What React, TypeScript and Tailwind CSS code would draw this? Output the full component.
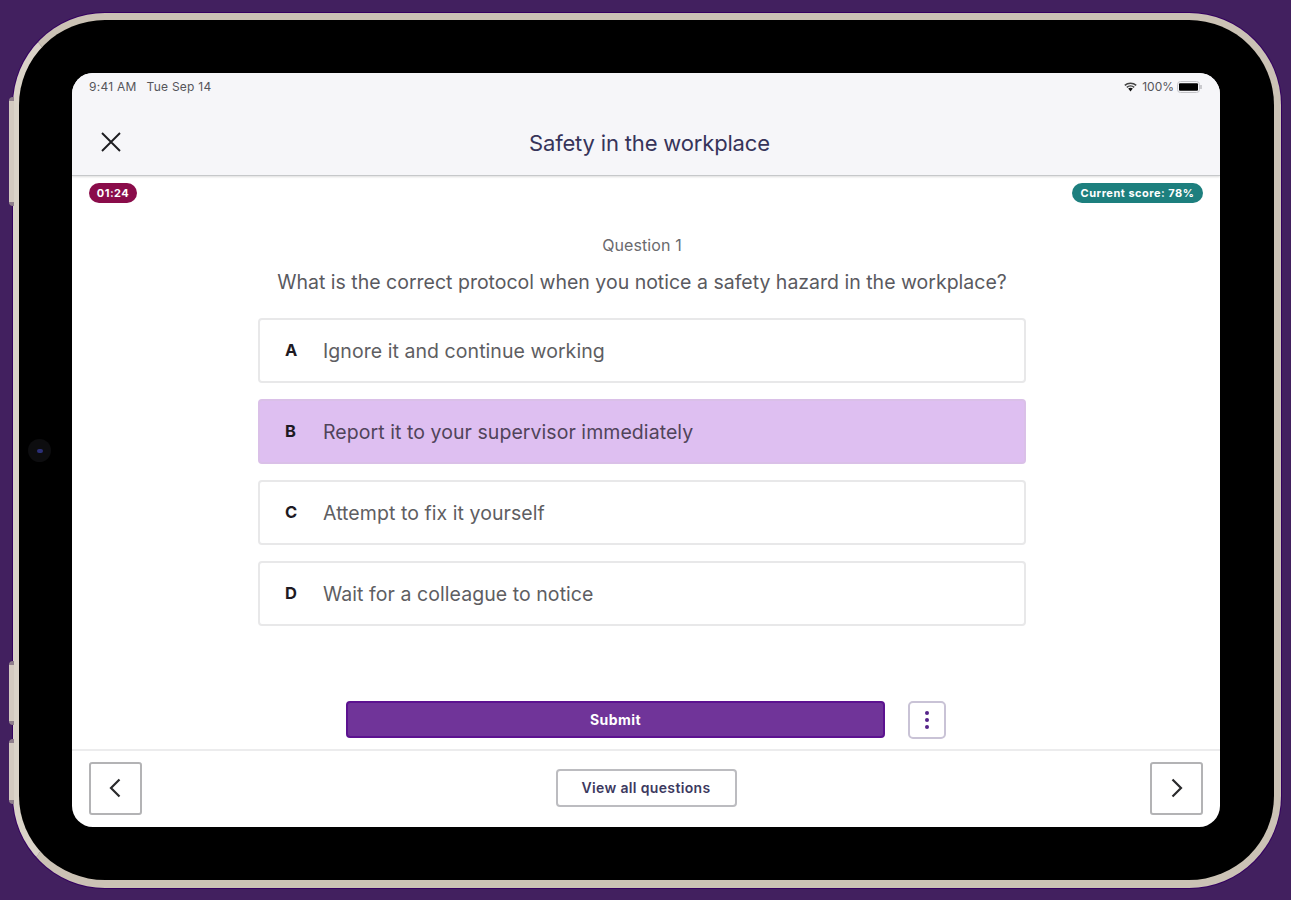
import { useState } from "react";

const options = [
  { key: "A", text: "Ignore it and continue working" },
  { key: "B", text: "Report it to your supervisor immediately" },
  { key: "C", text: "Attempt to fix it yourself" },
  { key: "D", text: "Wait for a colleague to notice" },
];

function StatusBar() {
  return (
    <div className="flex h-[27px] items-center justify-between pl-[17px] pr-[18px] text-[12px] leading-none text-[#55555a]">
      <div className="flex gap-[10px] tracking-[0.25px]">
        <span>9:41 AM</span>
        <span>Tue Sep 14</span>
      </div>
      <div className="flex items-center">
        <svg width="13" height="10" viewBox="0 0 13 10" className="mr-[5px]" fill="none" stroke="#444" strokeWidth="1.5">
          <path d="M0.8 3.4C4 0.4 9 0.4 12.2 3.4" />
          <path d="M2.8 5.4C4.9 3.5 8.1 3.5 10.2 5.4" />
          <path d="M4.2 6.6Q6.5 5 8.8 6.6L6.5 9.6Z" fill="#111" stroke="none" />
        </svg>
        <span>100%</span>
        <svg width="25" height="12" viewBox="0 0 25 12" className="ml-[3px]">
          <rect x="0.5" y="0.5" width="22" height="11" rx="3" fill="none" stroke="#c4c4c8" />
          <rect x="2" y="2.3" width="19" height="7.4" rx="1" fill="#000" />
          <path d="M24 4V8" stroke="#b4b4b8" strokeWidth="1.3" />
        </svg>
      </div>
    </div>
  );
}

function SideButton({ place }: { place: string }) {
  return <div className={`absolute left-[9px] w-[5px] rounded-l-sm border-y-4 border-[#8f7f8c] bg-[#d3cac0] ${place}`} />;
}

export default function App() {
  const [selected, setSelected] = useState("B");
  return (
    <div className="relative h-[900px] w-[1291px] overflow-hidden bg-[#42205f] pl-[13px] pt-[13px] font-[Inter,'Liberation_Sans',sans-serif]">
      <div className="relative h-[875px] w-[1268px] rounded-[92px] border-b-[8px] border-l-[6px] border-r-[7px] border-t-[7px] border-[#cbc2b5] border-l-[#dad3c8] bg-black pl-[53px] pt-[53px] shadow-[0_0_0_1px_#340060]">
        <div className="absolute left-[9px] top-[419px] flex h-[23px] w-[23px] items-center justify-center rounded-full bg-[#0d0d0f]">
          <div className="h-[4px] w-[6px] rounded-full bg-[#2b2f78]" />
        </div>

        <div className="flex h-[754px] w-[1148px] flex-col overflow-hidden rounded-[21px] bg-white">
          <header className="h-[103px] shrink-0 border-b border-[#c6c8ca] bg-[#f6f6f9] shadow-[0_1px_2px_#00000022]">
            <StatusBar />
            <div className="flex h-[75px] items-center pl-[29px] pt-[11px]">
              <svg width="20" height="20" viewBox="0 0 20 20" className="mb-[3px]" stroke="#1c1c20" strokeWidth="1.9">
                <path d="M1 1L19 19M19 1L1 19" />
              </svg>
              <h1 className="ml-[408px] whitespace-nowrap text-[22px] leading-none tracking-[-0.17px] text-[#36345a]">
                Safety in the workplace
              </h1>
            </div>
          </header>

          <div className="flex justify-between px-[17px] pt-[7px] text-[11px] font-bold leading-none tracking-[0.5px] text-white">
            <span className="flex h-[20px] w-[48px] items-center justify-center rounded-full bg-[#8a0c4a]">01:24</span>
            <span className="flex h-[20px] w-[131px] items-center justify-center whitespace-nowrap rounded-full bg-[#1d7f7e]">
              Current score: 78%
            </span>
          </div>

          <main className="ml-[186px] flex w-[768px] flex-col items-center pt-[32px]">
            <p className="text-[16px] leading-[20px] tracking-[0.1px] text-[#6a6a6e]">Question 1</p>
            <h2 className="mt-[15px] whitespace-nowrap text-[19.5px] leading-[24px] text-[#5a5a5f]">
              What is the correct protocol when you notice a safety hazard in the workplace?
            </h2>
            <div className="mt-[24px] flex w-full flex-col gap-4">
              {options.map((o) => (
                <button
                  key={o.key}
                  onClick={() => setSelected(o.key)}
                  className={`flex h-[65px] items-center rounded-[4px] border-2 pl-[23px] text-left leading-none ${
                    selected === o.key ? "border-[#dac0e8] bg-[#debff1] text-[#50445a]" : "border-[#e8e8e9] bg-white text-[#5e5e62]"
                  }`}
                >
                  <span className="w-[40px] pl-[2px] text-[16.5px] font-bold text-[#1e1a22]">{o.key}</span>
                  <span className="whitespace-nowrap pt-[2px] text-[19.5px] tracking-[0.06px]">{o.text}</span>
                </button>
              ))}
            </div>
          </main>

          <div className="mt-[75px] flex gap-[23px] pl-[274px]">
            <button className="h-[37px] w-[539px] rounded-[4px] border-2 border-[#5c1290] bg-[#703499] text-[14px] font-bold leading-none tracking-[0.45px] text-white">
              Submit
            </button>
            <button className="flex h-[38px] w-[38px] items-center justify-center rounded-[5px] border-2 border-[#c9c3d6] bg-white">
              <svg width="6" height="20" viewBox="0 0 6 20" fill="#55238a">
                <circle cx="3" cy="3" r="2" />
                <circle cx="3" cy="10" r="2" />
                <circle cx="3" cy="17" r="2" />
              </svg>
            </button>
          </div>

          <footer className="mt-[10px] flex h-[78px] items-center justify-between border-t-2 border-[#ececed] px-[17px] pb-[2px]">
            <button className="flex h-[53px] w-[53px] items-center justify-center rounded-[3px] border-2 border-[#b3b3b5]">
              <svg width="12" height="20" viewBox="0 0 12 20" className="mr-[2px]" fill="none" stroke="#2a2a2c" strokeWidth="2.2">
                <path d="M10.5 1.5L2 10L10.5 18.5" />
              </svg>
            </button>
            <button className="h-[38px] w-[181px] rounded-[4px] border-2 border-[#bcbcc0] text-[14px] font-semibold leading-none tracking-[0.35px] text-[#3c3960]">
              View all questions
            </button>
            <button className="flex h-[53px] w-[53px] items-center justify-center rounded-[3px] border-2 border-[#b3b3b5]">
              <svg width="12" height="20" viewBox="0 0 12 20" fill="none" stroke="#2a2a2c" strokeWidth="2.2">
                <path d="M1.5 1.5L10 10L1.5 18.5" />
              </svg>
            </button>
          </footer>
        </div>
      </div>

      <SideButton place="top-[97px] h-[109px]" />
      <SideButton place="top-[661px] h-[64px]" />
      <SideButton place="top-[739px] h-[65px]" />
    </div>
  );
}
